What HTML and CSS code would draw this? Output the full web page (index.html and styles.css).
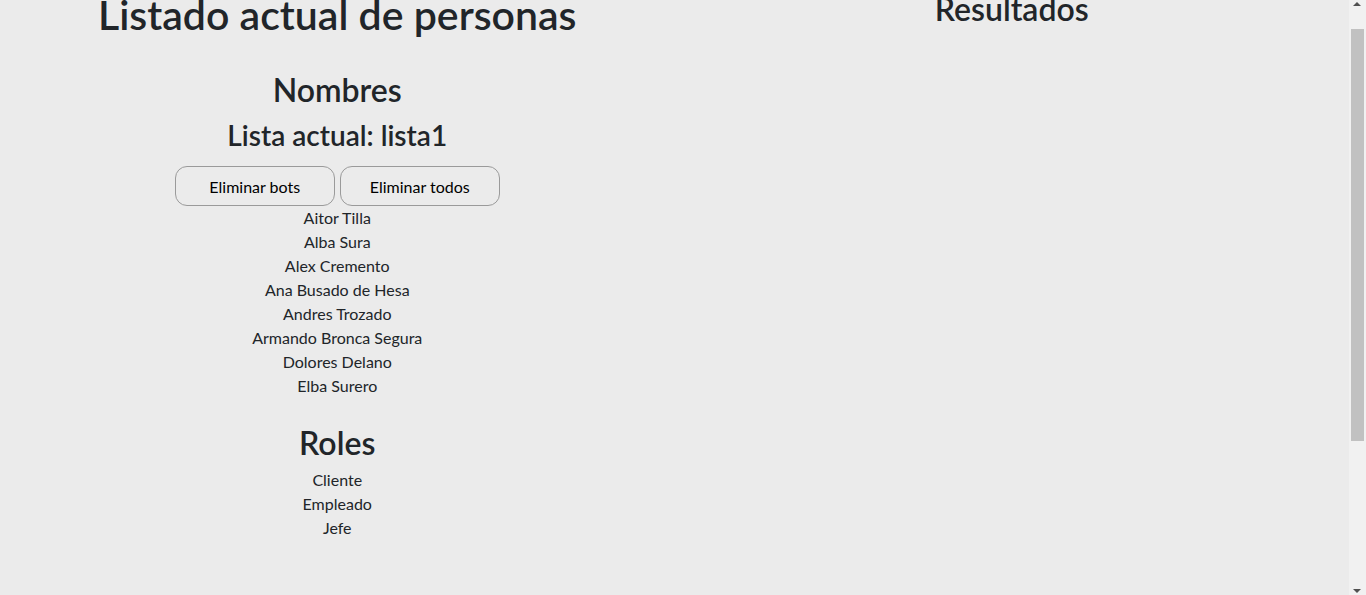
FILE: index.html
```html
<!DOCTYPE html>
<html lang="es">
<head>
<meta charset="utf-8">
<title>Listado actual de personas</title>
<link rel="stylesheet" href="styles.css">
</head>
<body>
<div class="page">
  <section class="col">
    <h1 class="title">Listado actual de personas</h1>
    <h2 class="section-title first">Nombres</h2>
    <h3 class="current">Lista actual: lista1</h3>
    <div class="actions">
      <button class="btn">Eliminar bots</button>
      <button class="btn">Eliminar todos</button>
    </div>
    <ul class="items">
      <li>Aitor Tilla</li>
      <li>Alba Sura</li>
      <li>Alex Cremento</li>
      <li>Ana Busado de Hesa</li>
      <li>Andres Trozado</li>
      <li>Armando Bronca Segura</li>
      <li>Dolores Delano</li>
      <li>Elba Surero</li>
    </ul>
    <h2 class="section-title roles">Roles</h2>
    <ul class="items">
      <li>Cliente</li>
      <li>Empleado</li>
      <li>Jefe</li>
    </ul>
  </section>
  <section class="col">
    <h2 class="section-title">Resultados</h2>
  </section>
</div>
<div class="scrollbar" aria-hidden="true">
  <span class="arrow up"></span>
  <span class="thumb"></span>
  <span class="arrow down"></span>
</div>
</body>
</html>
```
FILE: styles.css
```css
html, body {
  margin: 0;
  padding: 0;
}
body {
  background: #ebebeb;
  color: #212529;
  font-family: "Lato", "Open Sans", sans-serif;
  font-size: 16px;
  line-height: 1.5;
  overflow: hidden;
}
.page {
  display: grid;
  grid-template-columns: 1fr 1fr;
  margin-right: 17px;
  margin-top: -10px;
}
.col {
  text-align: center;
}
.title, .section-title, .current {
  font-weight: 600;
  line-height: 1.2;
  margin: 0 0 8px;
}
.title {
  font-size: 41px;
}
.section-title {
  font-size: 32px;
}
.section-title.first {
  margin-top: 32px;
  margin-bottom: 9px;
}
.section-title.roles {
  margin-top: 26px;
  margin-bottom: 5px;
}
.current {
  font-size: 28px;
  margin-bottom: 14px;
}
.actions {
  display: flex;
  justify-content: center;
  gap: 5px;
}
.btn {
  width: 160px;
  height: 40px;
  border: 1px solid #9a9a9a;
  border-radius: 12px;
  background: transparent;
  color: #000;
  font-family: inherit;
  font-size: 16px;
}
.items {
  list-style: none;
  margin: 0;
  padding: 0;
}
.scrollbar {
  position: fixed;
  top: 0;
  right: 0;
  width: 17px;
  height: 100%;
  background: #f1f1f1;
}
.thumb {
  position: absolute;
  left: 2px;
  top: 29px;
  width: 13px;
  height: 412px;
  background: #c1c1c1;
}
.arrow {
  position: absolute;
  left: 4px;
  width: 0;
  height: 0;
  border-left: 4px solid transparent;
  border-right: 4px solid transparent;
}
.arrow.up {
  top: 2px;
  border-bottom: 4px solid #505050;
}
.arrow.down {
  bottom: 2px;
  border-top: 4px solid #505050;
}
```
